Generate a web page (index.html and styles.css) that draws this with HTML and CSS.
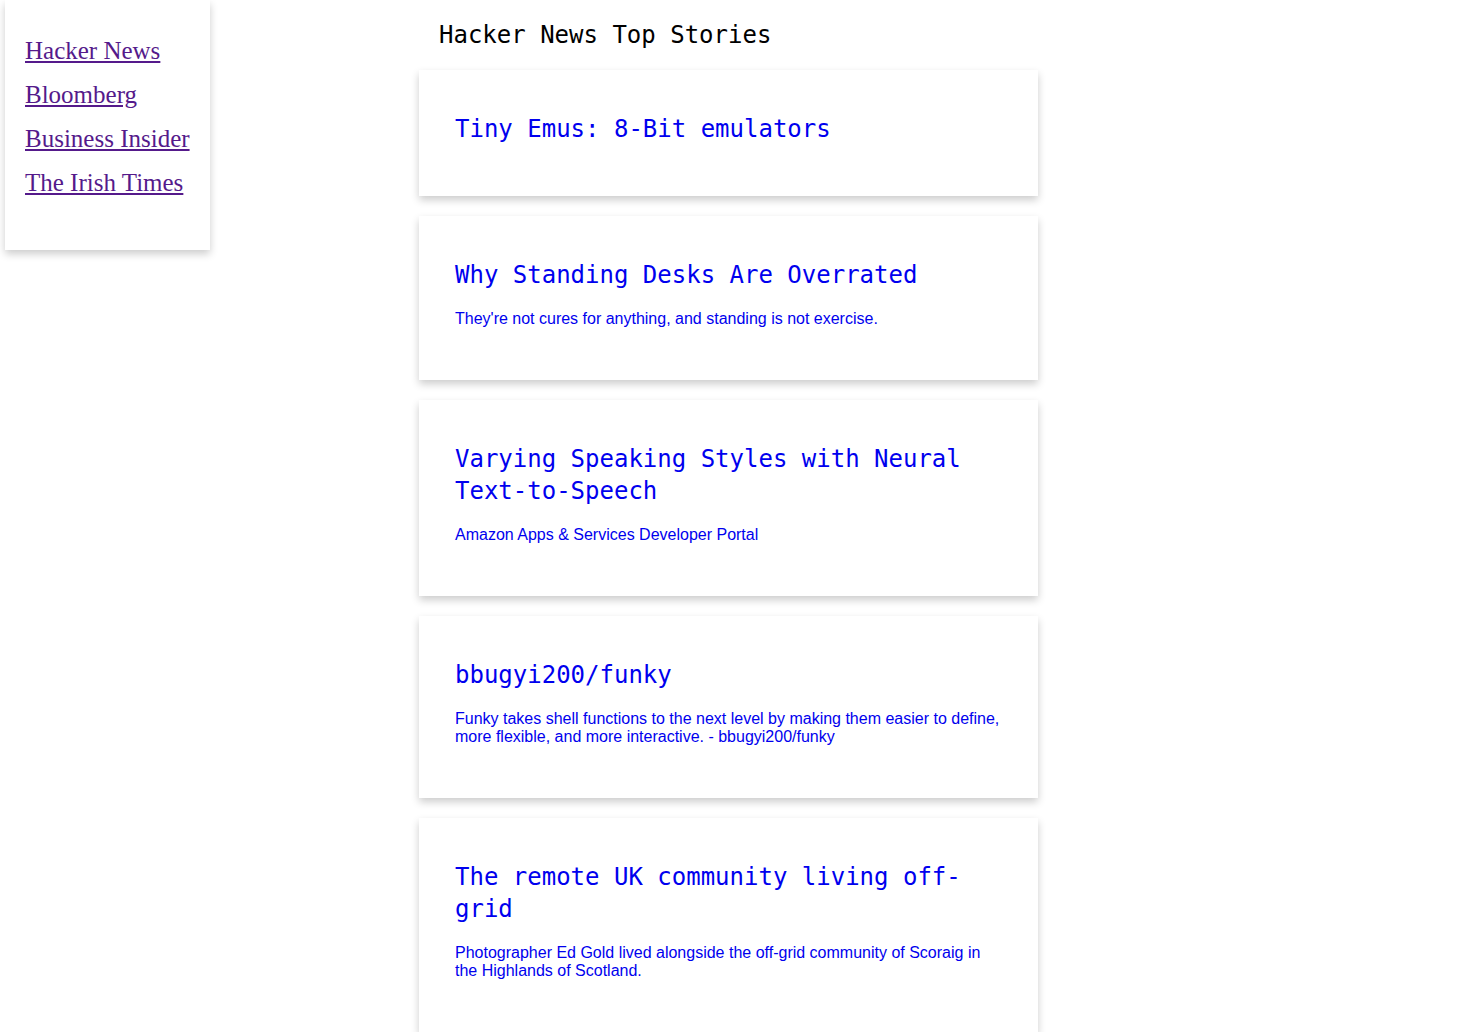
FILE: index.html
```html
<!DOCTYPE html>
<html lang="en">
<head>
<meta charset="utf-8">
<title>Hacker News Top Stories</title>
<link rel="stylesheet" href="styles.css">
</head>
<body>
<div class="layout">
  <nav class="sidebar">
    <a class="source" href="#hn">Hacker News</a>
    <a class="source" href="#bloomberg">Bloomberg</a>
    <a class="source" href="#bi">Business Insider</a>
    <a class="source" href="#irish">The Irish Times</a>
  </nav>
  <main class="feed">
    <h1 class="feed-title">Hacker News Top Stories</h1>
    <a class="card card-plain" href="#1">
      <h2 class="card-title">Tiny Emus: 8-Bit emulators</h2>
    </a>
    <a class="card" href="#2">
      <h2 class="card-title">Why Standing Desks Are Overrated</h2>
      <p class="card-desc">They're not cures for anything, and standing is not exercise.</p>
    </a>
    <a class="card" href="#3">
      <h2 class="card-title">Varying Speaking Styles with Neural Text-to-Speech</h2>
      <p class="card-desc">Amazon Apps &amp; Services Developer Portal</p>
    </a>
    <a class="card" href="#4">
      <h2 class="card-title">bbugyi200/funky</h2>
      <p class="card-desc">Funky takes shell functions to the next level by making them easier to define, more flexible, and more interactive. - bbugyi200/funky</p>
    </a>
    <a class="card" href="#5">
      <h2 class="card-title">The remote UK community living off-grid</h2>
      <p class="card-desc">Photographer Ed Gold lived alongside the off-grid community of Scoraig in the Highlands of Scotland.</p>
    </a>
  </main>
</div>
</body>
</html>
```

FILE: styles.css
```css
html, body {
  margin: 0;
  padding: 0;
  background: #ffffff;
}

.layout {
  display: flex;
  align-items: flex-start;
}

.sidebar {
  display: flex;
  flex-direction: column;
  margin-left: 5px;
  width: 205px;
  box-sizing: border-box;
  padding: 29px 0 45px 20px;
  background: #ffffff;
  box-shadow: 0 4px 8px rgba(0, 0, 0, 0.2);
}

.source {
  font-family: "Liberation Serif", "Times New Roman", serif;
  font-size: 25px;
  line-height: 44px;
  color: #551a8b;
  text-decoration: underline;
  white-space: nowrap;
}

.feed {
  margin-left: 209px;
  width: 619px;
  display: flex;
  flex-direction: column;
  gap: 20px;
}

.feed-title {
  margin: 19px 0 -1px 0;
  padding-left: 20px;
  font-family: "DejaVu Sans Mono", monospace;
  font-size: 24px;
  line-height: 32px;
  font-weight: normal;
  color: #000000;
}

.card {
  display: block;
  box-sizing: border-box;
  padding: 43px 36px 52px 36px;
  background: #ffffff;
  box-shadow: 0 4px 8px rgba(0, 0, 0, 0.2);
  color: #0000ee;
  text-decoration: none;
}

.card-plain {
  padding-bottom: 51px;
}

.card-title {
  margin: 0;
  font-family: "DejaVu Sans Mono", monospace;
  font-size: 24px;
  line-height: 32px;
  font-weight: normal;
  color: #0000ee;
}

.card-desc {
  margin: 19px 0 0 0;
  font-family: "Liberation Sans", Arial, sans-serif;
  font-size: 16px;
  line-height: 18px;
  color: #0000ee;
}
```
